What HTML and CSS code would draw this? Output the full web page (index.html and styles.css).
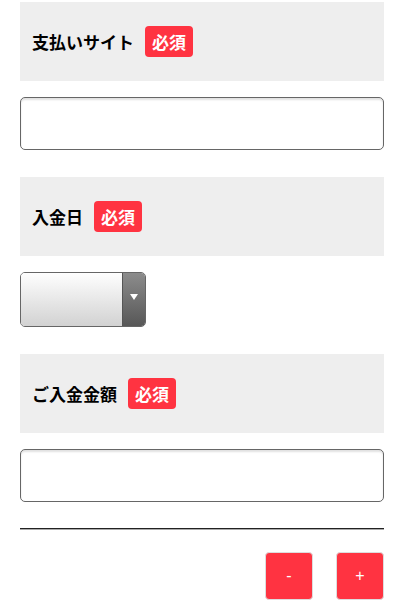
FILE: index.html
```html
<!DOCTYPE html>
<html lang="ja">
<head>
    <meta charset="UTF-8">
    <meta name="viewport" content="width=device-width, initial-scale=1.0">
    <title>入金登録</title>
    <link rel="stylesheet" href="styles.css">
</head>
<body>
    <div class="form">
        <div class="field-head">
            <span class="label">支払いサイト</span>
            <span class="required">必須</span>
        </div>
        <div class="field-body">
            <input type="text" class="text-input">
        </div>

        <div class="field-head">
            <span class="label">入金日</span>
            <span class="required">必須</span>
        </div>
        <div class="field-body">
            <div class="select-box">
                <span class="select-value"></span>
                <span class="select-arrow"></span>
            </div>
        </div>

        <div class="field-head">
            <span class="label">ご入金金額</span>
            <span class="required">必須</span>
        </div>
        <div class="field-body last">
            <input type="text" class="text-input">
        </div>

        <hr class="divider">

        <div class="buttons">
            <button class="small-btn">-</button>
            <button class="small-btn">+</button>
        </div>
    </div>
</body>
</html>
```

FILE: styles.css
```css
body {
    margin: 0;
    padding: 0;
    background: #fff;
    font-family: "Noto Sans CJK JP", "Noto Sans", sans-serif;
    color: #000;
}
.form {
    padding: 2px 16px 0 20px;
}
.field-head {
    display: flex;
    align-items: center;
    height: 79px;
    padding-left: 12px;
    background: #eeeeee;
}
.label {
    font-size: 17px;
    font-weight: bold;
    line-height: 1;
}
.required {
    margin-left: 11px;
    padding: 0 7px;
    height: 31px;
    line-height: 31px;
    font-size: 17px;
    font-weight: bold;
    color: #fff;
    background: #ff3341;
    border-radius: 4px;
}
.field-body {
    padding: 16px 0 27px;
}
.field-body.last {
    padding-bottom: 26px;
}
.text-input {
    display: block;
    box-sizing: border-box;
    width: 100%;
    height: 53px;
    margin: 0;
    border: 1px solid #666;
    border-radius: 5px;
    box-shadow: inset 0 2px 2px rgba(0, 0, 0, 0.12);
    background: #fff;
}
.select-box {
    display: flex;
    box-sizing: border-box;
    width: 126px;
    height: 55px;
    border: 1px solid #666;
    border-radius: 5px;
    overflow: hidden;
}
.select-value {
    flex: 1;
    background: linear-gradient(to bottom, #fefefe, #d2d2d2);
}
.select-arrow {
    position: relative;
    width: 22px;
    border-left: 1px solid #555;
    background: linear-gradient(to bottom, #8c8c8c, #575757);
}
.select-arrow::after {
    content: "";
    position: absolute;
    left: 7px;
    top: 21px;
    border-left: 4px solid transparent;
    border-right: 4px solid transparent;
    border-top: 6px solid #fff;
}
.divider {
    margin: 0;
    border: none;
    border-top: 1px solid #222;
    border-bottom: 1px solid #aaa;
}
.buttons {
    display: flex;
    justify-content: flex-end;
    gap: 23px;
    padding-top: 22px;
}
.small-btn {
    width: 48px;
    height: 48px;
    padding: 0;
    border: 1px solid #ddd;
    border-radius: 4px;
    background: #ff3341;
    color: #fff;
    font-family: "Liberation Sans", Arial, sans-serif;
    font-size: 16px;
}
```
